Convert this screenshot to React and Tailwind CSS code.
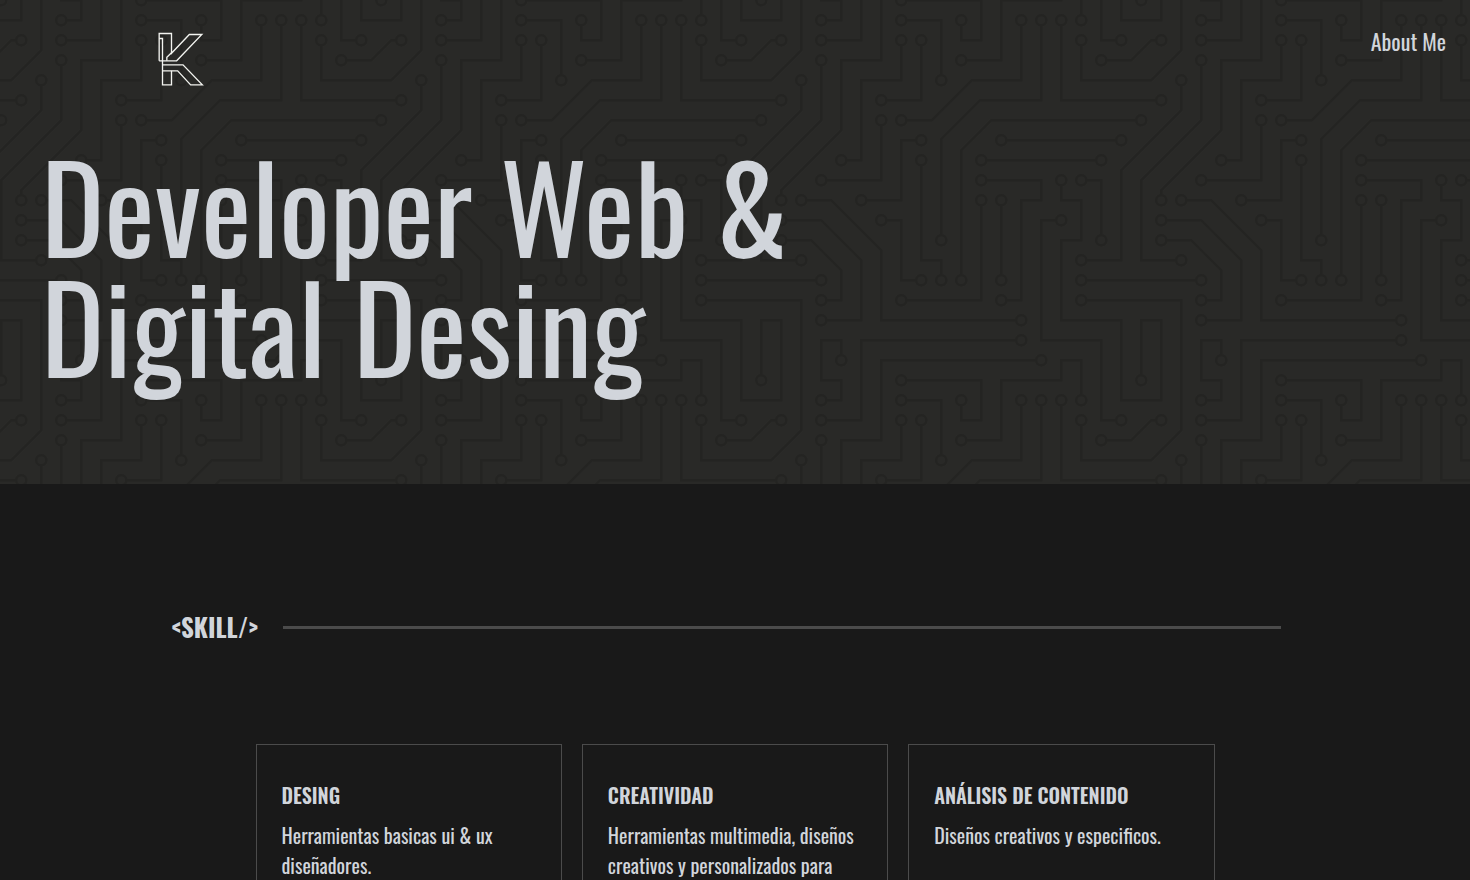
const NODES = [
  [49, 225], [209, 273], [257, 225], [257, 241], [273, 129], [177, 129], [17, 81], [193, 113],
  [289, 113], [257, 17], [193, 225], [193, 161], [241, 17], [257, 33], [129, 129], [145, 225],
  [129, 113], [81, 161], [113, 241], [177, 161], [97, 177], [129, 225], [65, 289], [241, 177],
  [257, 145], [273, 193], [193, 241], [177, 145], [289, 33], [97, 97], [49, 145], [49, 33],
  [113, 33], [65, 129], [97, 81], [129, 33], [113, 17], [145, 65], [225, 289], [241, 145],
  [49, 17], [161, 49], [113, 1], [113, 305], [161, 17], [113, 97], [209, 17], [145, 193],
  [225, 17], [161, 225], [1, 97], [305, 97], [17, 161], [33, 209], [49, 49], [33, 65],
  [17, 33], [273, 49], [257, 209], [49, 241], [17, 193], [209, 257], [33, 161], [49, 257],
  [17, 177], [1, 1], [305, 1], [1, 305], [305, 305],
];

const TRACES =
  "M44.1 224a5 5 0 1 1 0 2H0v-2h44.1zm160 48a5 5 0 1 1 0 2H82v-2h122.1zm57.8-46a5 5 0 1 1 0-2H304v2h-42.1zm0 16a5 5 0 1 1 0-2H304v2h-42.1zm6.2-114a5 5 0 1 1 0 2h-86.2a5 5 0 1 1 0-2h86.2zm-256-48a5 5 0 1 1 0 2H0v-2h12.1zm185.8 34a5 5 0 1 1 0-2h86.2a5 5 0 1 1 0 2h-86.2zM258 12.1a5 5 0 1 1-2 0V0h2v12.1zm-64 208a5 5 0 1 1-2 0v-54.2a5 5 0 1 1 2 0v54.2zm48-198.2V80h62v2h-64V21.9a5 5 0 1 1 2 0zm16 16V64h46v2h-48V37.9a5 5 0 1 1 2 0zm-128 96V208h16v12.1a5 5 0 1 1-2 0V210h-16v-76.1a5 5 0 1 1 2 0zm-5.9-21.9a5 5 0 1 1 0 2H114v48H85.9a5 5 0 1 1 0-2H112v-48h12.1zm-6.2 130a5 5 0 1 1 0-2H176v-74.1a5 5 0 1 1 2 0V242h-60.1zm-16-64a5 5 0 1 1 0-2H114v48h10.1a5 5 0 1 1 0 2H112v-48h-10.1zM66 284.1a5 5 0 1 1-2 0V274H50v30h-2v-32h18v12.1zM236.1 176a5 5 0 1 1 0 2H226v94h48v32h-2v-30h-48v-98h12.1zm25.8-30a5 5 0 1 1 0-2H274v44.1a5 5 0 1 1-2 0V146h-10.1zm-64 96a5 5 0 1 1 0-2H208v-80h16v-14h-42.1a5 5 0 1 1 0-2H226v18h-16v80h-12.1zm86.2-210a5 5 0 1 1 0 2H272V0h2v32h10.1zM98 101.9V146H53.9a5 5 0 1 1 0-2H96v-42.1a5 5 0 1 1 2 0zM53.9 34a5 5 0 1 1 0-2H80V0h2v34H53.9zm60.1 3.9V66H82v64H69.9a5 5 0 1 1 0-2H80V64h32V37.9a5 5 0 1 1 2 0zM101.9 82a5 5 0 1 1 0-2H128V37.9a5 5 0 1 1 2 0V82h-28.1zm16-64a5 5 0 1 1 0-2H146v44.1a5 5 0 1 1-2 0V18h-26.1zm102.2 270a5 5 0 1 1 0 2H98v14h-2v-16h124.1zM242 149.9V160h16v34h-16v62h48v48h-2v-46h-48v-66h16v-30h-16v-12.1a5 5 0 1 1 2 0zM53.9 18a5 5 0 1 1 0-2H64V2H48V0h18v18H53.9zm112 32a5 5 0 1 1 0-2H192V0h50v2h-48v48h-28.1zm-48-48a5 5 0 0 1-9.8-2h2.07a3 3 0 1 0 5.66 0H178v34h-18V21.9a5 5 0 1 1 2 0V32h14V2h-58.1zm0 96a5 5 0 1 1 0-2H137l32-32h39V21.9a5 5 0 1 1 2 0V66h-40.17l-32 32H117.9zm28.1 90.1a5 5 0 1 1-2 0v-76.51L175.59 80H224V21.9a5 5 0 1 1 2 0V82h-49.59L146 112.41v75.69zm16 32a5 5 0 1 1-2 0v-99.51L184.59 96H300.1a5 5 0 0 1 3.9-3.9v9.8a5 5 0 0 1-3.9-3.9H185.41L162 121.41v98.69zm-144-64a5 5 0 1 1-2 0v-3.51l48-48V48h32V0h2v50H66v55.41l-48 48v2.69zM50 53.9v43.51l-48 48V208h26.1a5 5 0 1 1 0 2H0v-65.41l48-48V53.9a5 5 0 1 1 2 0zm-16 16V89.41l-34 34v-2.82l32-32V69.9a5 5 0 1 1 2 0zM12.1 32a5 5 0 1 1 0 2H9.41L0 43.41V40.6L8.59 32h3.51zm265.8 18a5 5 0 1 1 0-2h18.69l7.41-7.41v2.82L297.41 50H277.9zm-16 160a5 5 0 1 1 0-2H288v-71.41l16-16v2.82l-14 14V210h-28.1zm-208 32a5 5 0 1 1 0-2H64v-22.59L40.59 194H21.9a5 5 0 1 1 0-2H41.41L66 216.59V242H53.9zm150.2 14a5 5 0 1 1 0 2H96v-56.6L56.6 162H37.9a5 5 0 1 1 0-2h19.5L98 200.6V256h106.1zm-150.2 2a5 5 0 1 1 0-2H80v-46.59L48.59 178H21.9a5 5 0 1 1 0-2H49.41L82 208.59V258H53.9zM34 39.8v1.61L9.41 66H0v-2h8.59L32 40.59V0h2v39.8zM2 304H0V256h18v48h-2v-46H2v46zM34 241v63h-2v-62H0v-2h34v1zM17 18H0v-2h16V0h2v18h-1zm273-2h14v2h-16V0h2v16zm-32 273v15h-2v-14h-14v14h-2v-16h18v1zM80 272h2v32h-2v-32z";

function CircuitBackground() {
  return (
    <svg className="absolute inset-0 -z-10 h-full w-full" aria-hidden="true">
      <defs>
        <pattern
          id="circuit"
          width="304"
          height="304"
          patternUnits="userSpaceOnUse"
          patternTransform="translate(0 -1) scale(1.25)"
        >
          <path d={TRACES} fill="#242422" />
          {NODES.map(([x, y]) => (
            <circle key={`${x}-${y}`} cx={x} cy={y} r="4" fill="#292927" stroke="#242422" strokeWidth="2" />
          ))}
        </pattern>
      </defs>
      <rect width="100%" height="100%" fill="url(#circuit)" />
    </svg>
  );
}

function Logo() {
  return (
    <svg
      className="h-[54px] w-[46px]"
      viewBox="54 36 138 162"
      fill="none"
      stroke="#f3f4f0"
      strokeWidth="4"
      aria-hidden="true"
    >
      <path d="M57.500 122.500V40.500H94.500V100L148 43.500H185.500L110 122.500H57.500" />
      <path d="M94.500 98L80.500 112V122" />
      <path d="M57.500 55.500H67.500V194.500H94.500V152" />
      <path d="M67.500 134.500H129L187 194.500H152L113 152.500H67.500" />
    </svg>
  );
}

const SKILLS = [
  { title: "DESING", text: "Herramientas basicas ui & ux diseñadores." },
  { title: "CREATIVIDAD", text: "Herramientas multimedia, diseños creativos y personalizados para" },
  { title: "ANÁLISIS DE CONTENIDO", text: "Diseños creativos y especificos." },
];

export default function App() {
  return (
    <div className="min-h-screen bg-[#191919] font-['Oswald','Liberation_Sans_Narrow',sans-serif] text-[#d1d5db]">
      <header className="relative isolate bg-[#292927] pb-[100px]">
        <CircuitBackground />
        <nav className="flex items-start justify-between pt-6 pr-6 pl-[158px]">
          <a href="#inicio" aria-label="Inicio" className="pt-2">
            <Logo />
          </a>
          <a href="#about" className="text-[22px] leading-[34px]">
            About Me
          </a>
        </nav>
        <h1 className="mt-[58px] max-w-[800px] pl-[41px] text-[120px] leading-[120px] font-normal">
          Developer Web &amp; Digital Desing
        </h1>
      </header>
      <main>
        <section className="pt-[120px]">
          <div className="flex items-center gap-[25px] pr-[189px] pl-[171px]">
            <h2 className="text-[25px] leading-[46px] font-bold">&lt;SKILL/&gt;</h2>
            <hr className="flex-1 border-t-[3px] border-[#4b4b4b]" />
          </div>
          <div className="mx-auto mt-[94px] grid max-w-[959px] grid-cols-3 gap-5">
            {SKILLS.map((skill) => (
              <article key={skill.title} className="min-h-60 border border-[#4b4b4b] px-[25px] py-[35px]">
                <h3 className="text-xl leading-[30px] font-semibold">{skill.title}</h3>
                <p className="mt-[10px] text-xl leading-[30px]">{skill.text}</p>
              </article>
            ))}
          </div>
        </section>
      </main>
    </div>
  );
}
